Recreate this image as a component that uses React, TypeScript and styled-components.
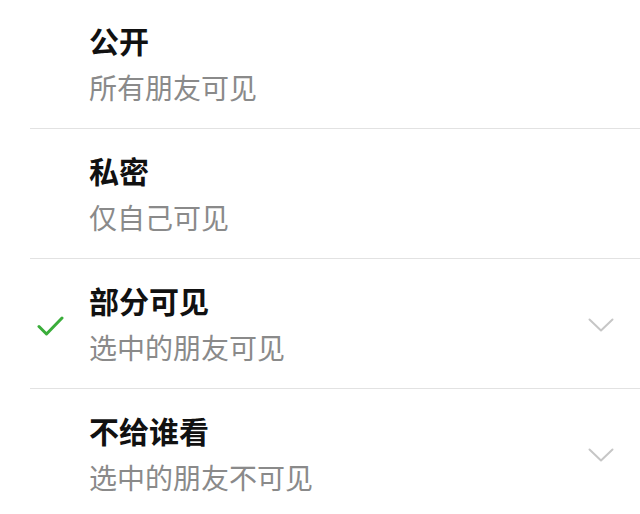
import React from 'react';
import styled, { createGlobalStyle } from 'styled-components';

const GlobalStyle = createGlobalStyle`
  html, body {
    margin: 0;
    padding: 0;
    background: #ffffff;
  }
  body {
    font-family: "Noto Sans CJK SC", "Noto Sans", sans-serif;
    -webkit-font-smoothing: antialiased;
  }
`;

type Option = {
  title: string;
  desc: string;
  checked?: boolean;
  expandable?: boolean;
};

const options: Option[] = [
  { title: '公开', desc: '所有朋友可见' },
  { title: '私密', desc: '仅自己可见' },
  { title: '部分可见', desc: '选中的朋友可见', checked: true, expandable: true },
  { title: '不给谁看', desc: '选中的朋友不可见', expandable: true },
];

const CheckIcon = () => (
  <svg width="27" height="22" viewBox="0 0 27 22" fill="none">
    <path
      d="M2 11.5 L9.5 19 L25 3"
      stroke="#3aad3a"
      strokeWidth="3"
      strokeLinecap="round"
      strokeLinejoin="round"
    />
  </svg>
);

const ChevronIcon = () => (
  <svg width="26" height="14" viewBox="0 0 26 14" fill="none">
    <path
      d="M1.5 1.5 L13 12.5 L24.5 1.5"
      stroke="#c6c6c6"
      strokeWidth="2"
      strokeLinecap="round"
      strokeLinejoin="round"
    />
  </svg>
);

export default function App() {
  return (
    <>
      <GlobalStyle />
      <S.List>
        {options.map((o) => (
          <S.Row key={o.title}>
            <S.CheckSlot>{o.checked && <CheckIcon />}</S.CheckSlot>
            <S.Texts>
              <S.Title>{o.title}</S.Title>
              <S.Desc>{o.desc}</S.Desc>
            </S.Texts>
            <S.Arrow>{o.expandable && <ChevronIcon />}</S.Arrow>
          </S.Row>
        ))}
      </S.List>
    </>
  );
}

const S = {
  List: styled.div`
    width: 640px;
    margin-top: -1px;
    background: #ffffff;
  `,
  Row: styled.div`
    display: flex;
    align-items: center;
    height: 129px;
    margin-left: 30px;
    border-bottom: 1px solid #e2e2e2;
  `,
  CheckSlot: styled.div`
    width: 59px;
    flex-shrink: 0;
    display: flex;
    align-items: center;
    padding-left: 7px;
    box-sizing: border-box;
    padding-top: 4px;
  `,
  Texts: styled.div`
    flex: 1;
    display: flex;
    flex-direction: column;
    padding-bottom: 2px;
  `,
  Title: styled.div`
    font-size: 30px;
    line-height: 40px;
    font-weight: 700;
    color: #111111;
  `,
  Desc: styled.div`
    margin-top: 8px;
    font-size: 28px;
    line-height: 38px;
    font-weight: 400;
    color: #8a8a8a;
  `,
  Arrow: styled.div`
    width: 26px;
    margin-right: 26px;
    display: flex;
    align-items: center;
    padding-top: 2px;
  `,
};
